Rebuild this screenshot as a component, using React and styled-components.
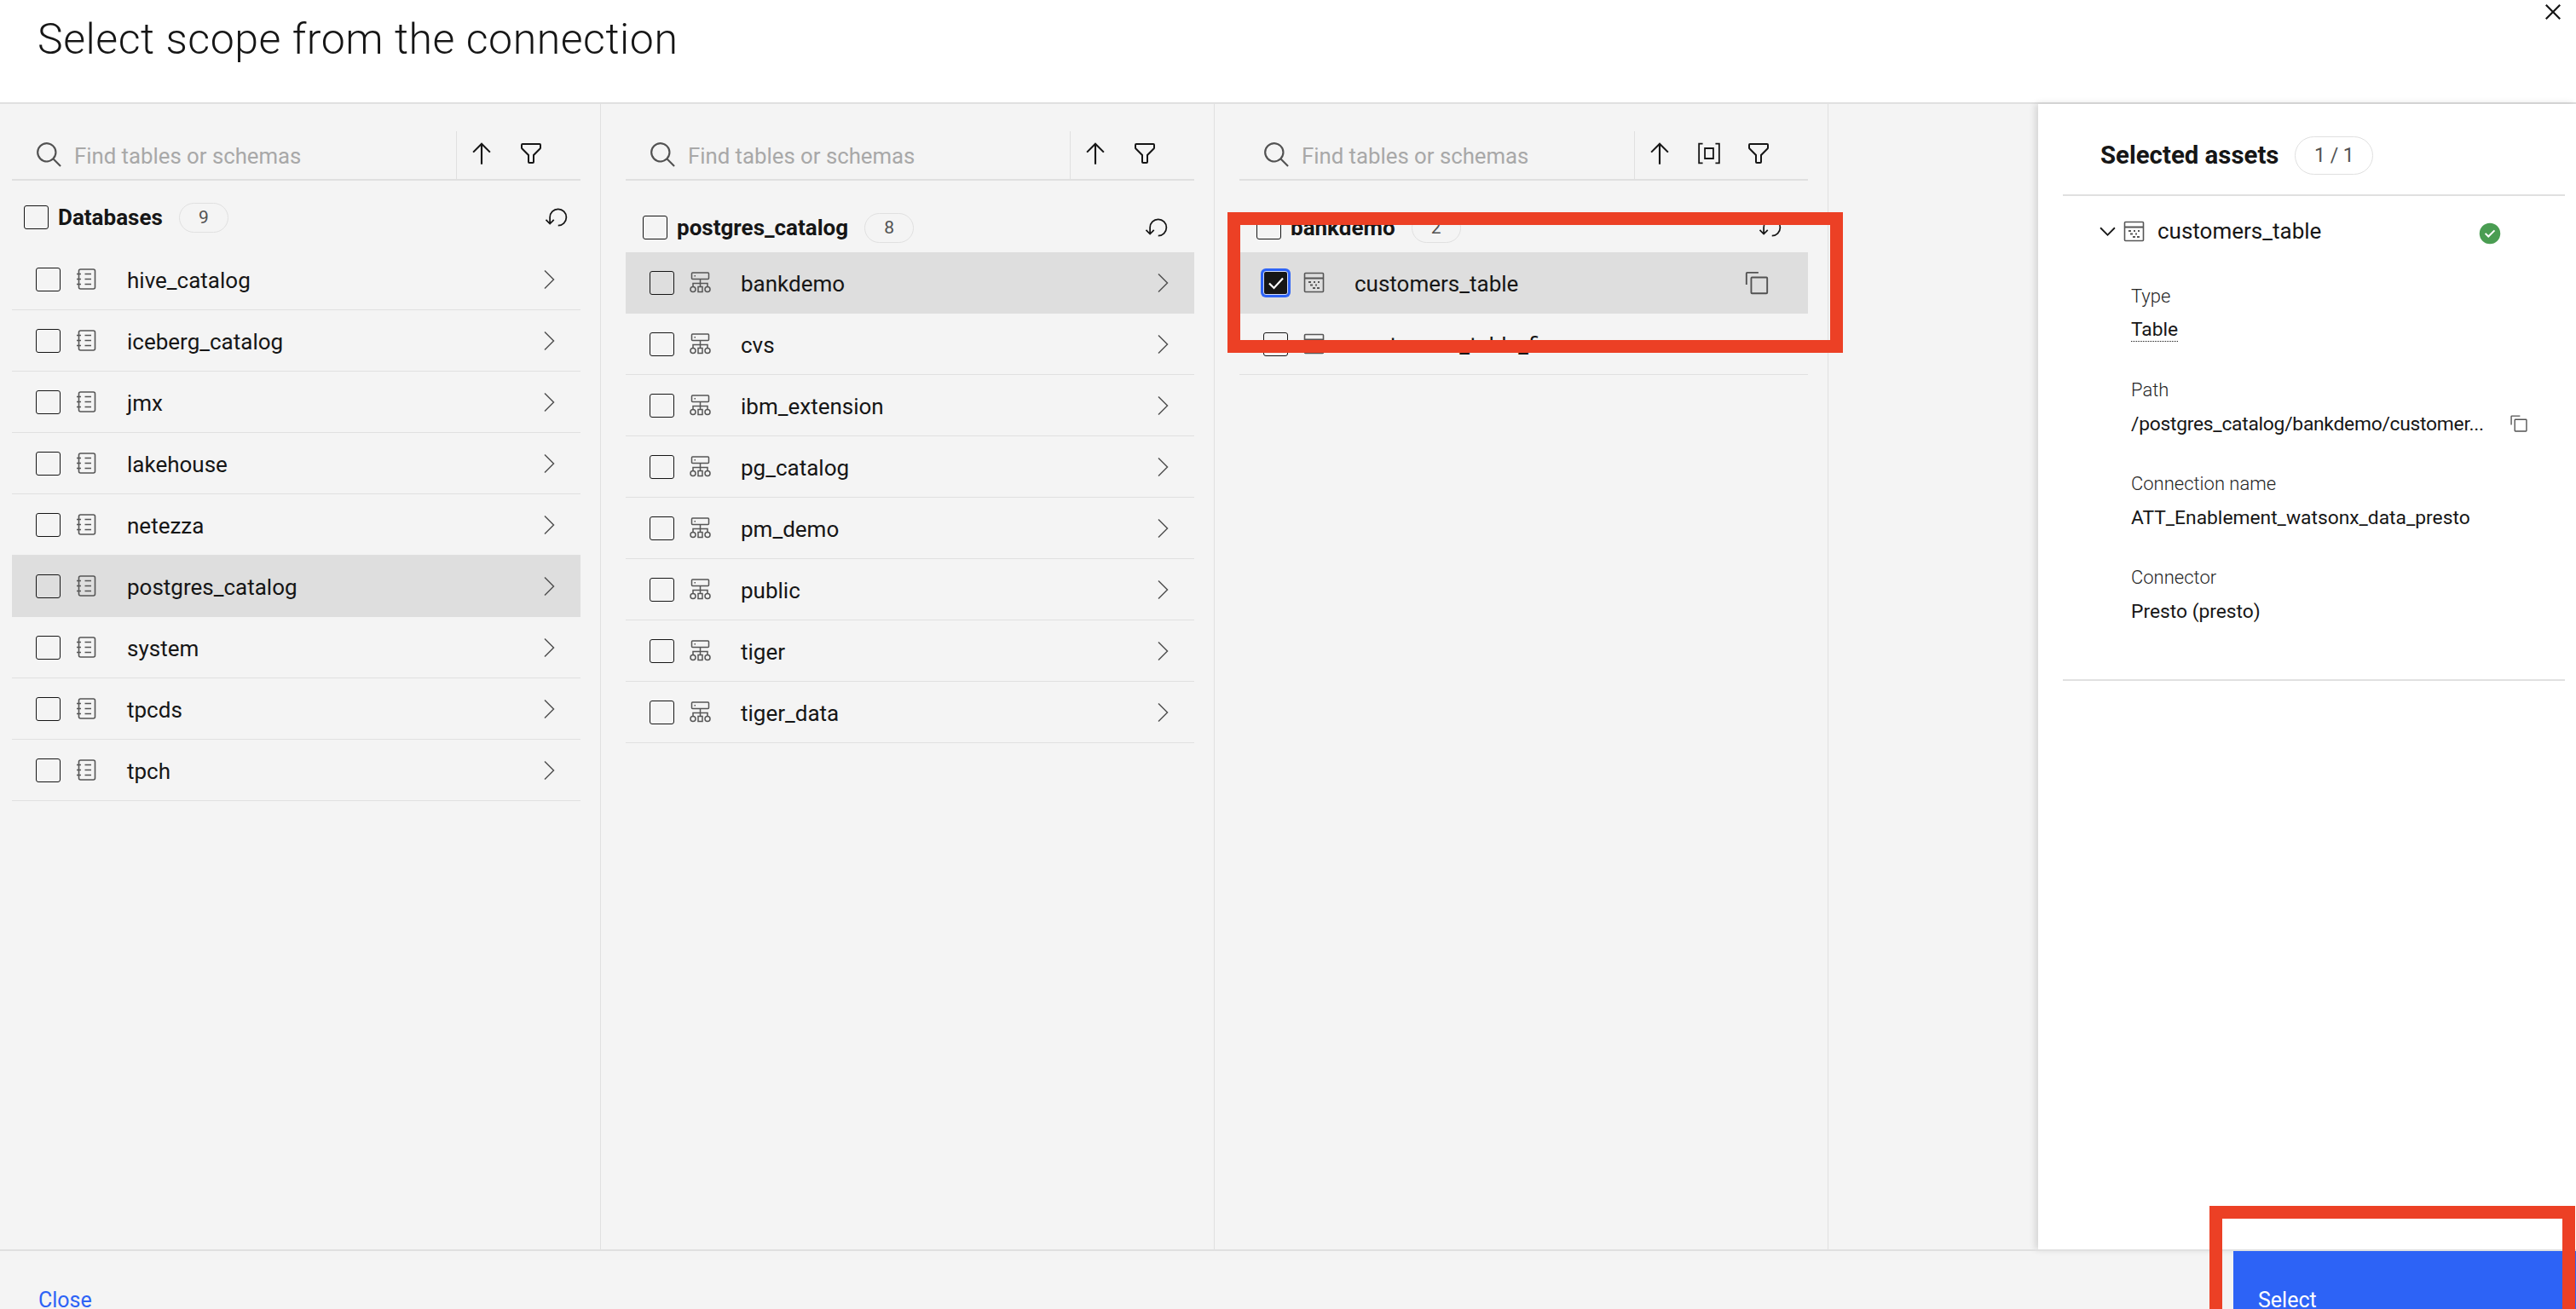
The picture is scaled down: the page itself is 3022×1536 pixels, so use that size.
import React from 'react'
import styled, { createGlobalStyle } from 'styled-components'

const GlobalStyle = createGlobalStyle`
  html, body {
    margin: 0;
    padding: 0;
    background: #f4f4f4;
    color: #161616;
    font-family: Roboto, "Liberation Sans", sans-serif;
  }
  * { box-sizing: border-box; }
`

const Page = styled.div`
  position: relative;
  width: 3022px;
  height: 1536px;
  overflow: hidden;
  display: flex;
  flex-direction: column;
  background: #f4f4f4;
`

const Header = styled.header`
  flex: 0 0 122px;
  display: flex;
  justify-content: space-between;
  align-items: flex-start;
  padding: 18px 9px 0 44px;
  background: #fff;
  border-bottom: 2px solid #e0e0e0;
`

const Title = styled.h1`
  margin: 0;
  font-size: 50px;
  line-height: 56px;
  letter-spacing: 0.55px;
  font-weight: 300;
  color: #161616;
`

const Main = styled.main`
  flex: 1;
  min-height: 0;
  display: flex;
`

const Column = styled.section`
  flex: 0 0 ${(p) => p.$width}px;
  display: flex;
  flex-direction: column;
  padding: 32px 23px 0 ${(p) => p.$inset}px;
  border-right: 1px solid #e0e0e0;
`

const Toolbar = styled.div`
  flex: 0 0 58px;
  display: flex;
  border-bottom: 2px solid #e0e0e0;
`

const SearchBox = styled.label`
  flex: 1;
  display: flex;
  align-items: center;
  gap: 12px;
  padding-left: 27px;
  border-right: 1px solid #e0e0e0;
  color: #525252;
`

const SearchInput = styled.input`
  flex: 1;
  min-width: 0;
  padding: 2px 0 0;
  border: 0;
  outline: 0;
  background: transparent;
  font-family: inherit;
  font-size: 25.75px;
  color: #161616;
  &::placeholder { color: #a8a8a8; opacity: 1; }
`

const Tools = styled.div`
  display: flex;
  padding-right: 29px;
`

const ToolButton = styled.button`
  width: 58px;
  padding: 0 0 4px;
  border: 0;
  background: none;
  color: #161616;
  display: flex;
  align-items: center;
  justify-content: center;
`

const ListHeader = styled.div`
  flex: 0 0 ${(p) => (p.$compact ? 80 : 84)}px;
  display: flex;
  align-items: center;
  padding: ${(p) => (p.$compact ? '6px 14px 0 14px' : '26px 30px 0 20px')};
`

const ListName = styled.span`
  margin-left: 11px;
  font-size: 26px;
  font-weight: 700;
  color: #161616;
`

const CountBadge = styled.span`
  flex: 0 0 auto;
  min-width: 58px;
  height: 35px;
  margin-left: 19px;
  display: flex;
  align-items: center;
  justify-content: center;
  border: 1px solid #e0e0e0;
  border-radius: 18px;
  font-size: 21px;
  color: #525252;
`

const ResetButton = styled.span`
  margin-left: auto;
  display: flex;
  color: #161616;
`

const Row = styled.div`
  flex: 0 0 72px;
  display: flex;
  align-items: center;
  padding: 0 20px 0 28px;
  background: ${(p) => (p.$active ? '#dedede' : 'transparent')};
  border-bottom: 1px solid ${(p) => (p.$active ? '#dedede' : '#e0e0e0')};
`

const Checkbox = styled.span`
  flex: 0 0 29px;
  height: 28px;
  display: flex;
  align-items: center;
  justify-content: center;
  border: ${(p) => (p.$checked ? '1px solid #d3dcf7' : '1.5px solid #161616')};
  border-radius: 3px;
  color: #fff;
  background: ${(p) => (p.$checked ? '#161616' : 'transparent')};
  box-shadow: ${(p) => (p.$checked ? '0 0 0 3px #2d63f6' : 'none')};
`

const RowIcon = styled.span`
  flex: 0 0 25px;
  margin-left: 18px;
  display: flex;
  color: #565656;
`

const RowName = styled.span`
  margin-left: 35px;
  padding-top: 3px;
  font-size: 26px;
  color: #161616;
  white-space: nowrap;
`

const RowAction = styled.span`
  margin-left: auto;
  display: flex;
  color: #525252;
  margin-right: ${(p) => (p.$copy ? 25 : 0)}px;
`

const Spacer = styled.div`
  flex: 1;
`

const AssetsPanel = styled.aside`
  flex: 0 0 631px;
  display: flex;
  flex-direction: column;
  padding: 0 13px 0 29px;
  background: #fff;
  box-shadow: -3px 0 8px rgba(0, 0, 0, 0.14);
`

const PanelHead = styled.div`
  flex: 0 0 108px;
  display: flex;
  align-items: center;
  padding: 14px 0 0 44px;
  border-bottom: 2px solid #e0e0e0;
`

const PanelTitle = styled.h2`
  margin: 0;
  font-size: 29.4px;
  font-weight: 700;
  color: #161616;
`

const PanelBadge = styled(CountBadge)`
  min-width: 92px;
  height: 45px;
  border-radius: 23px;
  font-size: 23px;
`

const Asset = styled.div`
  padding-bottom: 28px;
  border-bottom: 2px solid #e0e0e0;
`

const AssetRow = styled.div`
  height: 84px;
  display: flex;
  align-items: center;
  padding: 0 74px 2px 38px;
  color: #161616;
`

const AssetName = styled.span`
  margin-left: 15px;
  font-size: 26px;
`

const AssetIcon = styled.span`
  display: flex;
  margin-left: 4px;
  color: #565656;
`

const AssetStatus = styled.span`
  display: flex;
  margin: 6px 0 0 auto;
  color: #4a9d52;
`

const Fields = styled.dl`
  margin: 15px 0 0;
  padding-left: 80px;
`

const FieldLabel = styled.dt`
  font-size: 22px;
  line-height: 38px;
  font-weight: 300;
  color: #262626;
`

const FieldValue = styled.dd`
  margin: 0 0 34px;
  height: 38px;
  padding-top: 2px;
  display: flex;
  align-items: center;
  font-size: 22.8px;
  color: #161616;
`

const Dotted = styled.span`
  border-bottom: 1px dotted #161616;
`

const PathText = styled.span`
  letter-spacing: -0.25px;
`

const CopyButton = styled.span`
  display: flex;
  margin-left: 30px;
  color: #525252;
`

const Footer = styled.footer`
  flex: 0 0 70px;
  min-height: 0;
  display: flex;
  justify-content: space-between;
  border-top: 2px solid #e0e0e0;
`

const CloseLink = styled.a`
  padding: 43px 0 0 45px;
  font-size: 25px;
  line-height: 30px;
  color: #2d63f6;
`

const SelectButton = styled.div`
  width: 402px;
  height: 68px;
  padding: 43px 0 0 29px;
  background: #2d63f6;
  color: #fff;
  font-size: 25px;
  line-height: 30px;
`

const TableCallout = styled.div`
  position: absolute;
  left: 1440px;
  top: 249px;
  width: 722px;
  height: 165px;
  border: 15px solid #ec4025;
`

const SelectCallout = styled.div`
  position: absolute;
  left: 2592px;
  top: 1415px;
  width: 429px;
  height: 180px;
  border: 15px solid #ec4025;
`

const Glyph = ({ size, children, ...rest }) => (
  <svg width={size} height={size} viewBox="0 0 32 32" fill="currentColor" {...rest}>
    {children}
  </svg>
)

const SearchIcon = () => (
  <Glyph size={34}>
    <path d="M29,27.5859l-7.5521-7.5521a11.0177,11.0177,0,1,0-1.4141,1.4141L27.5859,29ZM4,13a9,9,0,1,1,9,9A9.01,9.01,0,0,1,4,13Z" />
  </Glyph>
)
const ArrowUpIcon = () => (
  <Glyph size={34}>
    <path d="M16 4L6 14 7.41 15.41 15 7.83 15 28 17 28 17 7.83 24.59 15.41 26 14 16 4z" />
  </Glyph>
)
const FilterIcon = () => (
  <Glyph size={32}>
    <path d="M18,28H14a2,2,0,0,1-2-2V18.41L4.59,11A2,2,0,0,1,4,9.59V6A2,2,0,0,1,6,4H26a2,2,0,0,1,2,2V9.59A2,2,0,0,1,27.41,11L20,18.41V26A2,2,0,0,1,18,28ZM6,6V9.59l8,8V26h4V17.59l8-8V6Z" />
  </Glyph>
)
const FitIcon = () => (
  <Glyph size={34}>
    <path d="M4 4.5h5v1.7H5.7v19.6H9v1.7H4zM28 4.5h-5v1.7h3.3v19.6H23v1.7h5zM10.5 9.5h11v13h-11zM12.2 11.2v9.6h7.6v-9.6z" fillRule="evenodd" />
  </Glyph>
)
const ResetIcon = () => (
  <Glyph size={28}>
    <path d="M18,28A12,12,0,1,0,6,16v6.2L2.4,18.6,1,20l6,6,6-6-1.4-1.4L8,22.2V16H8A10,10,0,1,1,18,26Z" />
  </Glyph>
)
const ChevronRightIcon = () => (
  <svg width="34" height="34" viewBox="0 0 34 34" fill="none" stroke="currentColor" strokeWidth="1.5">
    <path d="M12 6.5L22.5 17 12 27.5" />
  </svg>
)
const ChevronDownIcon = () => (
  <Glyph size={29}>
    <path d="M16 22L6 12 7.4 10.6 16 19.2 24.6 10.6 26 12z" />
  </Glyph>
)
const CopyIcon = ({ size }) => (
  <Glyph size={size}>
    <path d="M28,10V28H10V10H28m0-2H10a2,2,0,0,0-2,2V28a2,2,0,0,0,2,2H28a2,2,0,0,0,2-2V10a2,2,0,0,0-2-2Z" />
    <path d="M4,18H2V4A2,2,0,0,1,4,2H18V4H4Z" />
  </Glyph>
)
const CloseIcon = () => (
  <Glyph size={36} style={{ marginTop: -22 }}>
    <path d="M24 9.4L22.6 8 16 14.6 9.4 8 8 9.4 14.6 16 8 22.6 9.4 24 16 17.4 22.6 24 24 22.6 17.4 16 24 9.4z" />
  </Glyph>
)
const StatusIcon = () => (
  <Glyph size={28}>
    <path d="M16,2A14,14,0,1,0,30,16,14,14,0,0,0,16,2ZM14,21.5908l-5-5L10.5906,15,14,18.4092,21.41,11l1.5957,1.5859Z" />
  </Glyph>
)
const CheckIcon = () => (
  <svg width="22" height="22" viewBox="0 0 22 22" fill="none" stroke="currentColor" strokeWidth="2.2">
    <path d="M3 11.5l5.5 5.5L19 5.5" />
  </svg>
)

const CatalogIcon = () => (
  <svg width="25" height="25" viewBox="0 0 25 25" fill="none" stroke="currentColor" strokeWidth="1.6">
    <rect x="3.5" y="1" width="19" height="23" rx="2" />
    <path d="M1 6.5h5M1 12.5h5M1 18.5h5M10.5 6.5h7.5M10.5 12.5h7.5M10.5 18.5h7.5" />
  </svg>
)
const SchemaIcon = () => (
  <svg width="25" height="25" viewBox="0 0 25 25" fill="none" stroke="currentColor" strokeWidth="1.5">
    <rect x="2.5" y="1" width="20" height="7.5" rx="1" />
    <path d="M5.5 4.7h1.5M12.5 8.5v9M4 17v-3.5h17V17" />
    <circle cx="4" cy="20.5" r="3" />
    <rect x="10" y="17.5" width="5" height="6" />
    <circle cx="21" cy="20.5" r="3" />
  </svg>
)
const TableIcon = () => (
  <svg width="25" height="25" viewBox="0 0 25 25" fill="none" stroke="currentColor" strokeWidth="1.6">
    <rect x="1.5" y="1.5" width="22" height="22" rx="1" />
    <path d="M1.5 7.5h22" strokeWidth="2" />
    <path d="M6 12h3M12 12h2M17 12h2M8 15.5h3M14 15.5h2M11 19h3M16 19h3" strokeWidth="1.8" />
  </svg>
)

const databases = ['hive_catalog', 'iceberg_catalog', 'jmx', 'lakehouse', 'netezza', 'postgres_catalog', 'system', 'tpcds', 'tpch']
const schemas = ['bankdemo', 'cvs', 'ibm_extension', 'pg_catalog', 'pm_demo', 'public', 'tiger', 'tiger_data']

function ColumnSearch({ fit }) {
  return (
    <Toolbar>
      <SearchBox>
        <SearchIcon />
        <SearchInput placeholder="Find tables or schemas" />
      </SearchBox>
      <Tools>
        <ToolButton><ArrowUpIcon /></ToolButton>
        {fit && <ToolButton><FitIcon /></ToolButton>}
        <ToolButton><FilterIcon /></ToolButton>
      </Tools>
    </Toolbar>
  )
}

function ColumnHeader({ name, count, compact }) {
  return (
    <ListHeader $compact={compact}>
      <Checkbox />
      <ListName>{name}</ListName>
      <CountBadge>{count}</CountBadge>
      <ResetButton><ResetIcon /></ResetButton>
    </ListHeader>
  )
}

export default function App() {
  return (
    <Page>
      <GlobalStyle />
      <Header>
        <Title>Select scope from the connection</Title>
        <CloseIcon />
      </Header>
      <Main>
        <Column $width={705} $inset={14}>
          <ColumnSearch />
          <ColumnHeader name="Databases" count="9" compact />
          {databases.map((name) => (
            <Row key={name} $active={name === 'postgres_catalog'}>
              <Checkbox />
              <RowIcon><CatalogIcon /></RowIcon>
              <RowName>{name}</RowName>
              <RowAction><ChevronRightIcon /></RowAction>
            </Row>
          ))}
        </Column>
        <Column $width={720} $inset={29}>
          <ColumnSearch />
          <ColumnHeader name="postgres_catalog" count="8" />
          {schemas.map((name) => (
            <Row key={name} $active={name === 'bankdemo'}>
              <Checkbox />
              <RowIcon><SchemaIcon /></RowIcon>
              <RowName>{name}</RowName>
              <RowAction><ChevronRightIcon /></RowAction>
            </Row>
          ))}
        </Column>
        <Column $width={720} $inset={29}>
          <ColumnSearch fit />
          <ColumnHeader name="bankdemo" count="2" />
          <Row $active>
            <Checkbox $checked><CheckIcon /></Checkbox>
            <RowIcon><TableIcon /></RowIcon>
            <RowName>customers_table</RowName>
            <RowAction $copy><CopyIcon size={30} /></RowAction>
          </Row>
          <Row>
            <Checkbox />
            <RowIcon><TableIcon /></RowIcon>
            <RowName>customers_table_fix</RowName>
          </Row>
        </Column>
        <Spacer />
        <AssetsPanel>
          <PanelHead>
            <PanelTitle>Selected assets</PanelTitle>
            <PanelBadge>1 / 1</PanelBadge>
          </PanelHead>
          <Asset>
            <AssetRow>
              <ChevronDownIcon />
              <AssetIcon><TableIcon /></AssetIcon>
              <AssetName>customers_table</AssetName>
              <AssetStatus><StatusIcon /></AssetStatus>
            </AssetRow>
            <Fields>
              <FieldLabel>Type</FieldLabel>
              <FieldValue><Dotted>Table</Dotted></FieldValue>
              <FieldLabel>Path</FieldLabel>
              <FieldValue>
                <PathText>/postgres_catalog/bankdemo/customer...</PathText>
                <CopyButton><CopyIcon size={22} /></CopyButton>
              </FieldValue>
              <FieldLabel>Connection name</FieldLabel>
              <FieldValue>ATT_Enablement_watsonx_data_presto</FieldValue>
              <FieldLabel>Connector</FieldLabel>
              <FieldValue>Presto (presto)</FieldValue>
            </Fields>
          </Asset>
        </AssetsPanel>
      </Main>
      <Footer>
        <CloseLink>Close</CloseLink>
        <SelectButton>Select</SelectButton>
      </Footer>
      <TableCallout />
      <SelectCallout />
    </Page>
  )
}
